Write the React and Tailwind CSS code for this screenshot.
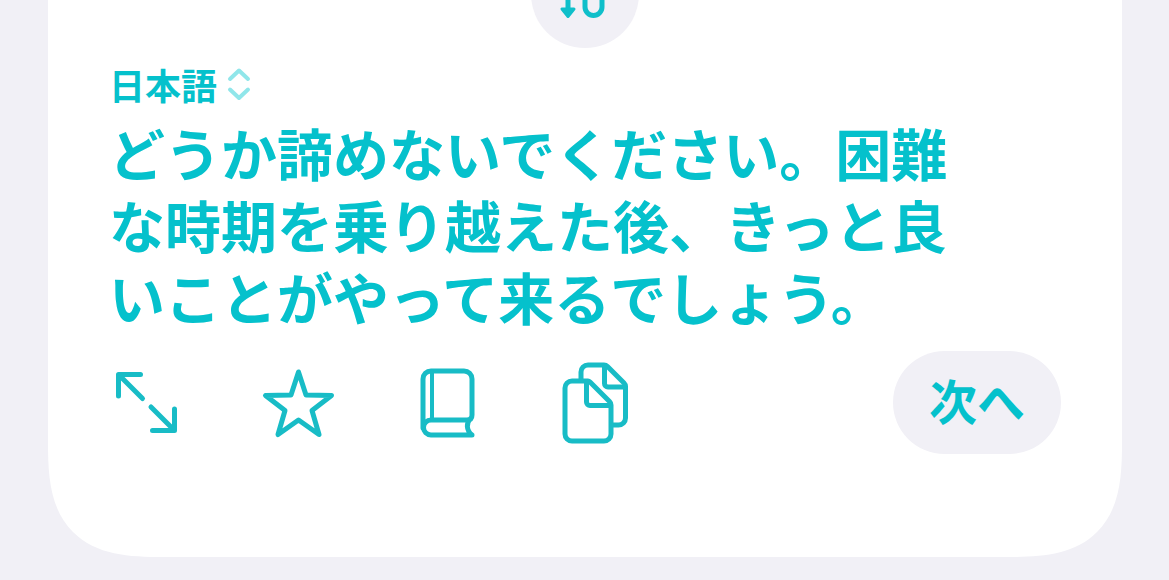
import React, { useState } from 'react';

const LANGUAGES = [
  { code: 'ja', label: '日本語' },
  { code: 'en', label: '英語' },
  { code: 'ko', label: '韓国語' },
];

const TRANSLATION =
  'どうか諦めないでください。困難な時期を乗り越えた後、きっと良いことがやって来るでしょう。';

function SwapIcon() {
  return (
    <svg viewBox="0 0 108 108" className="h-27 w-27" fill="none" stroke="currentColor" strokeWidth="5" strokeLinecap="round">
      <path d="M37 70V39a8.500 8.500 0 0 1 17 0v28a8.500 8.500 0 0 0 17 0V38" />
      <path d="M31 69h12l-6 7.500z" fill="currentColor" strokeWidth="3" strokeLinejoin="round" />
      <path d="M65 39h12l-6-7.500z" fill="currentColor" strokeWidth="3" strokeLinejoin="round" />
    </svg>
  );
}

function ChevronsIcon() {
  return (
    <svg viewBox="0 0 24 36" className="h-9 w-6" fill="none" stroke="currentColor" strokeWidth="4" strokeLinecap="round" strokeLinejoin="round">
      <path d="M3 13l9-8.500 9 8.500M3 23.500l9 8.500 9-8.500" />
    </svg>
  );
}

// Toolbar glyphs share one 80x84 box
function ExpandIcon() {
  return (
    <>
      <path d="M34.500 13.500h-22v21.500M13 14l23.500 23.500" />
      <path d="M46.500 69.500h22V48M68 69L45 46" />
    </>
  );
}

function StarIcon() {
  return (
    <path d="M42.500 11L50 34l25.500.500L56 49.500 63 73.500 42.500 59 22 73.500 29 49.500 9.500 34.500 35 34z" />
  );
}

function BookIcon() {
  return (
    <>
      <path d="M17 67V18a8 8 0 0 1 8-8h33a8 8 0 0 1 8 8v36q0 5-5 5H25a7.500 7.500 0 0 0 0 15h41c-6-5-6-12-1-17" />
      <path d="M26 11v47" strokeWidth="4" />
    </>
  );
}

function CopyIcon() {
  return (
    <>
      <path d="M32 20H16a7 7 0 0 0-7 7v46a7 7 0 0 0 7 7h32a7 7 0 0 0 7-7V44q0-2-1.500-3.500L34 21q-1-1-2-1z" />
      <path d="M30.500 21v20a3.500 3.500 0 0 0 3.500 3.500h20" />
      <path d="M25 19v-8a7 7 0 0 1 7-7h16q2 0 3.500 1.500L68 22q1.500 1.500 1.500 3.500V57a7 7 0 0 1-7 7H57" />
      <path d="M48.500 5v17.500a3.500 3.500 0 0 0 3.500 3.500h17" />
    </>
  );
}

const ACTIONS = [
  { name: '拡大', Icon: ExpandIcon },
  { name: 'お気に入り', Icon: StarIcon },
  { name: '辞書', Icon: BookIcon },
  { name: 'コピー', Icon: CopyIcon },
];

export default function App() {
  const [language, setLanguage] = useState('ja');

  return (
    <div
      lang="ja"
      className="min-h-screen overflow-hidden bg-[#f1f0f6] pr-[47px] pb-6 pl-12 font-['Noto_Sans_CJK_JP',sans-serif] text-[#05c1cc]"
    >
      {/* Smooth corners where the browser has them */}
      <main className="rounded-b-[86px] bg-white px-[61px] pb-[103px] supports-[corner-shape:squircle]:rounded-b-[115px] supports-[corner-shape:squircle]:[corner-shape:superellipse(1.5)]">
        {/* Swap languages */}
        <div className="-mt-15 flex justify-center">
          <button type="button" aria-label="言語を入れ替える" className="rounded-full bg-[#f1f0f6] text-[#0fbfca]">
            <SwapIcon />
          </button>
        </div>

        <div className="mt-3 flex h-12 items-center gap-2">
          <select
            aria-label="翻訳先の言語"
            value={language}
            onChange={(e) => setLanguage(e.target.value)}
            className="h-12 w-[110px] appearance-none bg-transparent text-[36px] leading-[48px] font-bold"
          >
            {LANGUAGES.map((l) => (
              <option key={l.code} value={l.code}>{l.label}</option>
            ))}
          </select>
          <span className="text-[#90e6ea]">
            <ChevronsIcon />
          </span>
        </div>

        <p className="mt-2 max-w-[880px] text-[56px] leading-[72px] font-bold">{TRANSLATION}</p>

        {/* Actions */}
        <div className="mt-[19px] flex items-center justify-between">
          <div className="-ml-[3px] flex gap-[70px] text-[#18bcc6]">
            {ACTIONS.map(({ name, Icon }) => (
              <button key={name} type="button" aria-label={name}>
                <svg viewBox="0 0 80 84" className="h-21 w-20" fill="none" stroke="currentColor" strokeWidth="5" strokeLinecap="round" strokeLinejoin="round">
                  <Icon />
                </svg>
              </button>
            ))}
          </div>
          <button type="button" className="h-[103px] w-42 rounded-full bg-[#f1f0f6] pb-2 text-[48px] leading-[72px] font-bold">
            次へ
          </button>
        </div>
      </main>
    </div>
  );
}
